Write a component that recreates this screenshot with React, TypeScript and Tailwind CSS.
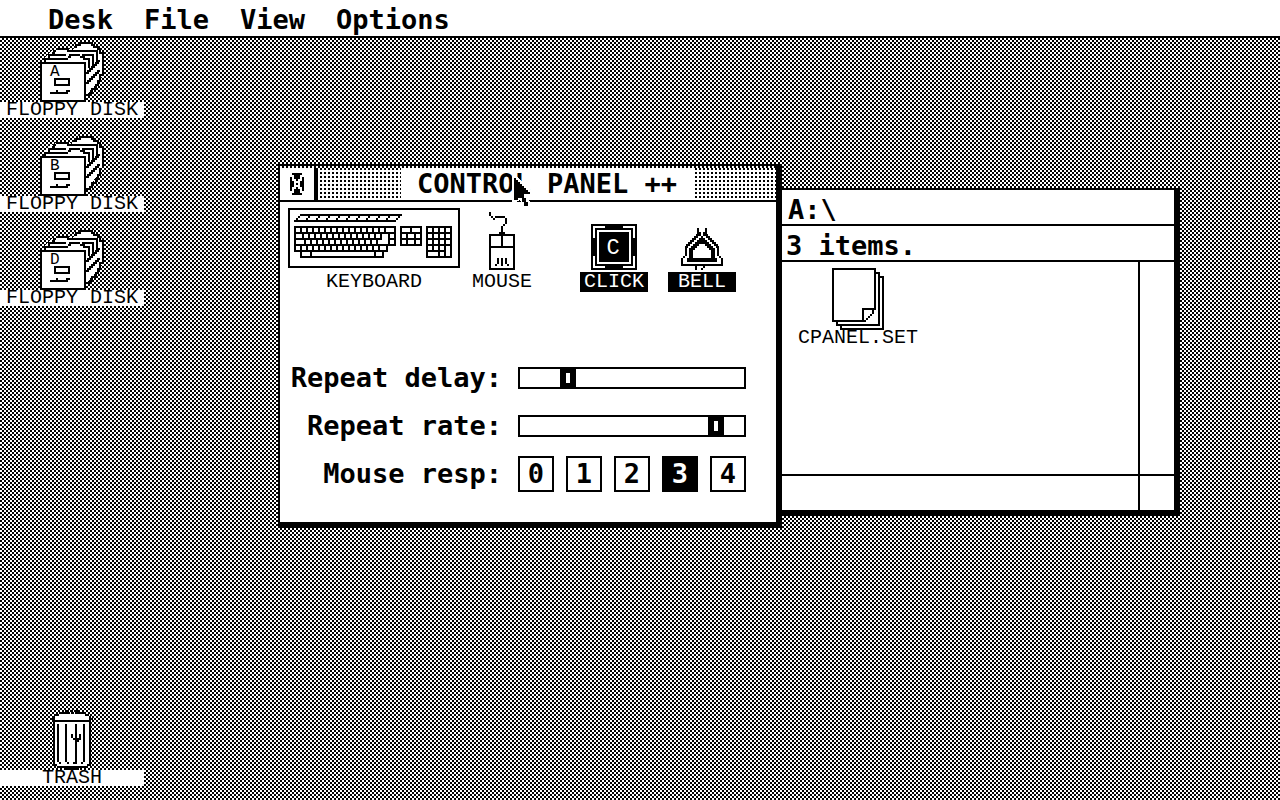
import { ReactNode, useState } from "react";

const bigText = "font-['DejaVu_Sans_Mono',monospace] text-[27px] leading-8 font-bold";
const smallText = "font-['Liberation_Mono',monospace] text-xl leading-4";

interface IconProps {
  width: number;
  height: number;
  className?: string;
  children: ReactNode;
}

// every icon is drawn on a grid where one unit is two screen pixels
function PixelIcon({ width, height, className, children }: IconProps) {
  return (
    <svg
      className={className}
      width={width * 2}
      height={height * 2}
      viewBox={`0 0 ${width} ${height}`}
      shapeRendering="crispEdges"
      fill="none"
      stroke="#000"
      aria-hidden="true"
    >
      {children}
    </svg>
  );
}

function FloppyIcon({ letter }: { letter: string }) {
  return (
    <PixelIcon width={32} height={30}>
      <path
        d="M2 10V8L5 5L9 3H14L16 4L18 2L20 0H25L28 3L31 5V17L23 27V10Z"
        fill="#fff"
        stroke="none"
      />
      <path d="M2.5 10V8.5H14M4.5 8V6.5H13M6 5.5H7V4.5H8M8 3.5H14V4.5H16M17 2.5H18V1.5H20V0.5H26V1.5H27V2.5H29V3.5H30V5.5H31.5V16" />
      <path d="M16 4.5H28.5V10M21 6.5H26.5V12M14 7.5H15V6.5H20M20 7.5H22V8.5H24.5V13" />
      <path d="M23 15.5H24V14.5H25V13.5H26V12.5H27V11.5H28V10.5H29V9.5H30M23 20.5H24V19.5H25V18.5H26V17.5H27V16.5H28V15.5H29V14.5H30M23 26.5H25V25.5H26V23.5H28V21.5H29V19.5H30V16.5H31" />
      <rect x="0.5" y="10.5" width="22" height="19" fill="#fff" />
      <text
        x="5"
        y="17"
        fill="#000"
        stroke="none"
        fontSize="8"
        fontFamily="Liberation Mono, monospace"
      >
        {letter}
      </text>
      <path d="M7.5 18.5H14.5V21.5H7.5Z" />
      <path d="M5 25.5H14M8 24.5H9M13 24.5H15" />
    </PixelIcon>
  );
}

function TrashIcon() {
  return (
    <PixelIcon width={21} height={30}>
      <path d="M4 2H17L20 3V27L17 29H4L1 27V3Z" fill="#fff" stroke="none" />
      <path d="M7 0.5H9M10 0.5H11M12 0.5H14M4 1.5H9M10 1.5H11M12 1.5H17M2 2.5H4M17 2.5H19M1.5 3V4M19.5 3V4M0 4.5H2M19 4.5H21M2 5.5H19" />
      <path d="M1.5 5V28M19.5 5V28M2.5 27V28M18.5 27V28M3 28.5H18M7 29.5H14" />
      <path d="M3.5 7V26M4 26.5H5M7.5 7V26M8 26.5H9M12.5 7V26M11 26.5H13M16.5 7V26M15 26.5H16" />
      <path d="M10.5 12V14M11 14.5H12M12 15.5H14M13 14.5H15M14.5 12V14" />
    </PixelIcon>
  );
}

function KeyboardIcon() {
  return (
    <PixelIcon width={86} height={30} className="mb-1">
      <rect x="0.5" y="0.5" width="85" height="29" />
      {/* function keys */}
      <path d="M6 3.5H57M3 6.5H54M5 4.5H6M4 5.5H5M55 4.5H56M54 5.5H55" />
      <path d="M10 4.5H11M15 4.5H16M20 4.5H21M25 4.5H26M30 4.5H31M35 4.5H36M40 4.5H41M45 4.5H46M50 4.5H51" />
      <path d="M9 5.5H10M14 5.5H15M19 5.5H20M24 5.5H25M29 5.5H30M34 5.5H35M39 5.5H40M44 5.5H45M49 5.5H50" />
      {/* main block */}
      <path d="M3 9.5H54M3 12.5H54M3 15.5H47M50 15.5H54M3 18.5H54M3 21.5H50M6 24.5H48M3.5 9V22M53.5 9V19" />
      <path d="M6.5 9V12M9.5 9V12M12.5 9V12M15.5 9V12M18.5 9V12M21.5 9V12M24.5 9V12M27.5 9V12M30.5 9V12M33.5 9V12M36.5 9V12M39.5 9V12M42.5 9V12M45.5 9V12M48.5 9V12" />
      <path d="M7.5 12V15M10.5 12V15M13.5 12V15M16.5 12V15M19.5 12V15M22.5 12V15M25.5 12V15M28.5 12V15M31.5 12V15M34.5 12V15M37.5 12V15M40.5 12V15M43.5 12V15M46.5 12V15M50.5 12V19" />
      <path d="M8.5 15V18M11.5 15V18M14.5 15V18M17.5 15V18M20.5 15V18M23.5 15V18M26.5 15V18M29.5 15V18M32.5 15V18M35.5 15V18M38.5 15V18M41.5 15V18M44.5 15V18" />
      <path d="M6.5 18V21M9.5 18V21M12.5 18V21M15.5 18V21M18.5 18V21M21.5 18V21M24.5 18V21M27.5 18V21M30.5 18V21M33.5 18V21M36.5 18V21M39.5 18V21M42.5 18V21M45.5 18V21M49.5 18V21" />
      <path d="M6.5 21V24M11.5 21V24M43.5 21V24M47.5 21V24" />
      {/* cursor block */}
      <path d="M56 9.5H67M56 12.5H67M56 15.5H67M56 18.5H67M56.5 9V19M66.5 9V19M61.5 9V12M59.5 12V18M63.5 12V18" />
      {/* number pad */}
      <path d="M69 9.5H82M69 12.5H82M69 15.5H82M69 18.5H82M69 21.5H79M69 24.5H82M69.5 9V25M72.5 9V21M75.5 9V25M78.5 9V25M81.5 9V25" />
    </PixelIcon>
  );
}

function MouseIcon() {
  return (
    <PixelIcon width={13} height={29} className="mb-0.5">
      <path d="M0.5 0V2M1.5 2V3M2 3.5H3M3 2.5H8M8.5 3V6M7.5 6V7M6.5 7V11M5 10.5H8" />
      <rect x="0.5" y="11.5" width="12" height="17" />
      <path d="M0 17.5H13M6.5 11V17" />
      <path d="M6.5 23V27M4.5 23V26M3 26.5H4M8.5 23V26M9 26.5H10" />
    </PixelIcon>
  );
}

function ClickIcon() {
  return (
    <PixelIcon width={23} height={23} className="mb-0.5">
      <rect width="23" height="23" fill="#000" stroke="none" />
      <path
        d="M1.5 7V1.5H7M16 1.5H21.5V7M1.5 16V21.5H7M16 21.5H21.5V16"
        stroke="#fff"
      />
      <rect x="3.5" y="3.5" width="16" height="16" stroke="#fff" />
      <text
        x="11"
        y="15"
        fill="#fff"
        stroke="none"
        fontSize="11"
        textAnchor="middle"
        fontFamily="Liberation Mono, monospace"
      >
        C
      </text>
    </PixelIcon>
  );
}

function BellIcon() {
  return (
    <PixelIcon width={21} height={21} className="mb-0.5">
      <path d="M8.5 0V3M12.5 0V3M9.5 2V4M11.5 2V4" />
      <path d="M9 3.5H8V4.5H7V5.5H6V6.5H5V7.5H4V8.5H3V9.5H2.5V14M12 3.5H13V4.5H14V5.5H15V6.5H16V7.5H17V8.5H18V9.5H18.5V14" />
      <path d="M1.5 14V15M0.5 15V19M19.5 14V15M20.5 15V19M0 18.5H21" />
      <path
        d="M10 4H11V5H12V6H13V7H14V8H15V9H16V10H17V15H18V17H3V15H4V10H5V9H6V8H7V7H8V6H9V5H10ZM9 8V9H8V10H7V11H6V15H15V11H14V10H13V9H12V8Z"
        fill="#000"
        stroke="none"
        fillRule="evenodd"
      />
      <path d="M7.5 19V21M10 20.5H11M11.5 19V20" />
    </PixelIcon>
  );
}

function DocumentIcon() {
  return (
    <PixelIcon width={26} height={31}>
      <path d="M4.5 29V30.5H25.5V4.5H24" />
      <path d="M2.5 27V28.5H23.5V2.5H22" />
      <path d="M21.5 21V0.5H0.5V26.5H16M15.5 26V20.5H21M20 21.5H21M20 22.5H21M19 23.5H20M18 24.5H19M17 25.5H18M16 26.5H17" />
    </PixelIcon>
  );
}

function CloseIcon() {
  return (
    <PixelIcon width={7} height={11}>
      <path d="M1 0.5H6M2 1.5H5M2 2.5H5M3 3.5H4M0.5 2V9M6.5 2V9M1.5 4V7M5.5 4V7M3 5.5H4M3 7.5H4M2 8.5H5M2 9.5H5M1 10.5H6" />
    </PixelIcon>
  );
}

function Pointer() {
  return (
    <PixelIcon
      width={11}
      height={17}
      className="pointer-events-none absolute top-[138px] left-[512px] z-20"
    >
      <path
        d="M0 0H2L11 9V11H8L10 15V16H6L4 12L2 13H0Z"
        fill="#fff"
        stroke="none"
      />
      <path
        d="M1 1H2V2H3V3H4V4H5V5H6V6H7V7H8V8H9V9H6V11H7V13H8V15H6V13H5V11H3V12H1Z"
        fill="#000"
        stroke="none"
      />
    </PixelIcon>
  );
}

function DesktopIcon({ label, children }: { label: string; children: ReactNode }) {
  return (
    <button className="flex w-36 flex-col items-center">
      {children}
      <span className={`${smallText} w-full bg-white text-center`}>{label}</span>
    </button>
  );
}

interface SliderProps {
  id: string;
  label: string;
  value: number;
  setValue: (value: number) => void;
}

function Slider({ id, label, value, setValue }: SliderProps) {
  return (
    <>
      <label htmlFor={id} className="text-right">
        {label}
      </label>
      <input
        id={id}
        type="range"
        min={0}
        max={52}
        value={value}
        onChange={(e) => setValue(parseInt(e.target.value))}
        className="h-[22px] w-full appearance-none border-2 border-black bg-white [&::-webkit-slider-thumb]:h-[18px] [&::-webkit-slider-thumb]:w-4 [&::-webkit-slider-thumb]:appearance-none [&::-webkit-slider-thumb]:border-x-6 [&::-webkit-slider-thumb]:border-y-4 [&::-webkit-slider-thumb]:border-black [&::-webkit-slider-thumb]:bg-white"
      />
    </>
  );
}

function ControlPanel() {
  const [delay, setDelay] = useState<number>(10);
  const [rate, setRate] = useState<number>(47);
  const [response, setResponse] = useState<number>(3);
  const [click, setClick] = useState<boolean>(true);
  const [bell, setBell] = useState<boolean>(true);

  const toggleLabel = `${smallText} flex h-5 w-[68px] items-center justify-center`;
  const dots =
    "flex-1 bg-[conic-gradient(#000_0_25%,#fff_0)] bg-[length:4px_4px]";

  return (
    <section className="absolute top-[126px] left-[278px] z-10 w-[504px] border-2 border-r-6 border-b-6 border-black bg-white">
      <div className="h-0.5 bg-[conic-gradient(#000_0_25%,#fff_0)] bg-[length:4px_4px]" />
      <header className="flex h-[34px] border-b-2 border-black">
        <button
          aria-label="Close"
          className="flex w-[38px] items-center justify-center border-r-4 border-black"
        >
          <CloseIcon />
        </button>
        <div className={dots} />
        <h1 className={`${bigText} px-4`}>CONTROL PANEL ++</h1>
        <div className={dots} />
      </header>
      <div className="flex items-end pt-1.5 pl-2">
        <div className="flex flex-col items-center">
          <KeyboardIcon />
          <span className={`${smallText} h-5 pt-0.5`}>KEYBOARD</span>
        </div>
        <div className="ml-3 flex flex-col items-center">
          <MouseIcon />
          <span className={`${smallText} h-5 pt-0.5`}>MOUSE</span>
        </div>
        <button
          aria-pressed={click}
          onClick={() => setClick(!click)}
          className="ml-12 flex flex-col items-center"
        >
          <ClickIcon />
          <span className={`${toggleLabel} ${click ? "bg-black text-white" : ""}`}>
            CLICK
          </span>
        </button>
        <button
          aria-pressed={bell}
          onClick={() => setBell(!bell)}
          className="ml-5 flex flex-col items-center"
        >
          <BellIcon />
          <span className={`${toggleLabel} ${bell ? "bg-black text-white" : ""}`}>
            BELL
          </span>
        </button>
      </div>
      <div
        className={`${bigText} mt-[62px] mb-6 grid auto-rows-[48px] grid-cols-[222px_228px] items-center gap-x-4`}
      >
        <Slider id="delay" label="Repeat delay:" value={delay} setValue={setDelay} />
        <Slider id="rate" label="Repeat rate:" value={rate} setValue={setRate} />
        <span id="response" className="text-right">
          Mouse resp:
        </span>
        <div role="group" aria-labelledby="response" className="flex gap-3">
          {[0, 1, 2, 3, 4].map((level) => (
            <button
              key={level}
              aria-pressed={level === response}
              onClick={() => setResponse(level)}
              className={`size-9 border-2 border-black ${
                level === response ? "bg-black text-white" : ""
              }`}
            >
              {level}
            </button>
          ))}
        </div>
      </div>
    </section>
  );
}

function FileWindow() {
  return (
    <section className="absolute top-[150px] left-[780px] w-[400px] border-t-2 border-r-6 border-b-6 border-black bg-white">
      <h2 className={`${bigText} h-9 border-b-2 border-black pt-1 pl-2`}>A:\</h2>
      <p className={`${bigText} h-9 border-b-2 border-black pt-1 pl-1.5`}>
        3 items.
      </p>
      <div className="grid grid-cols-[1fr_36px] grid-rows-[212px_36px]">
        <div className="flex items-start pt-1.5 pl-[18px]">
          <button className="flex flex-col items-center">
            <DocumentIcon />
            <span className={smallText}>CPANEL.SET</span>
          </button>
        </div>
        <div className="border-l-2 border-black" />
        <div className="border-t-2 border-black" />
        <div className="border-t-2 border-l-2 border-black" />
      </div>
    </section>
  );
}

function App() {
  return (
    <div className="flex min-h-screen flex-col bg-white text-black">
      <nav className={`${bigText} flex border-b-2 border-black pt-1 pl-12`}>
        {["Desk", "File", "View", "Options"].map((menu) => (
          <button key={menu} className="min-w-24 text-left">
            {menu}
          </button>
        ))}
      </nav>
      <main className="relative flex flex-1 flex-col items-start justify-between overflow-hidden bg-[repeating-conic-gradient(#000_0_25%,#fff_0_50%)] bg-[length:4px_4px] pt-1 pb-3.5">
        <div className="flex flex-col gap-[18px]">
          {["A", "B", "D"].map((letter) => (
            <DesktopIcon key={letter} label="FLOPPY DISK">
              <FloppyIcon letter={letter} />
            </DesktopIcon>
          ))}
        </div>
        <DesktopIcon label="TRASH">
          <TrashIcon />
        </DesktopIcon>
        <FileWindow />
        <ControlPanel />
        <Pointer />
      </main>
    </div>
  );
}

export default App;
